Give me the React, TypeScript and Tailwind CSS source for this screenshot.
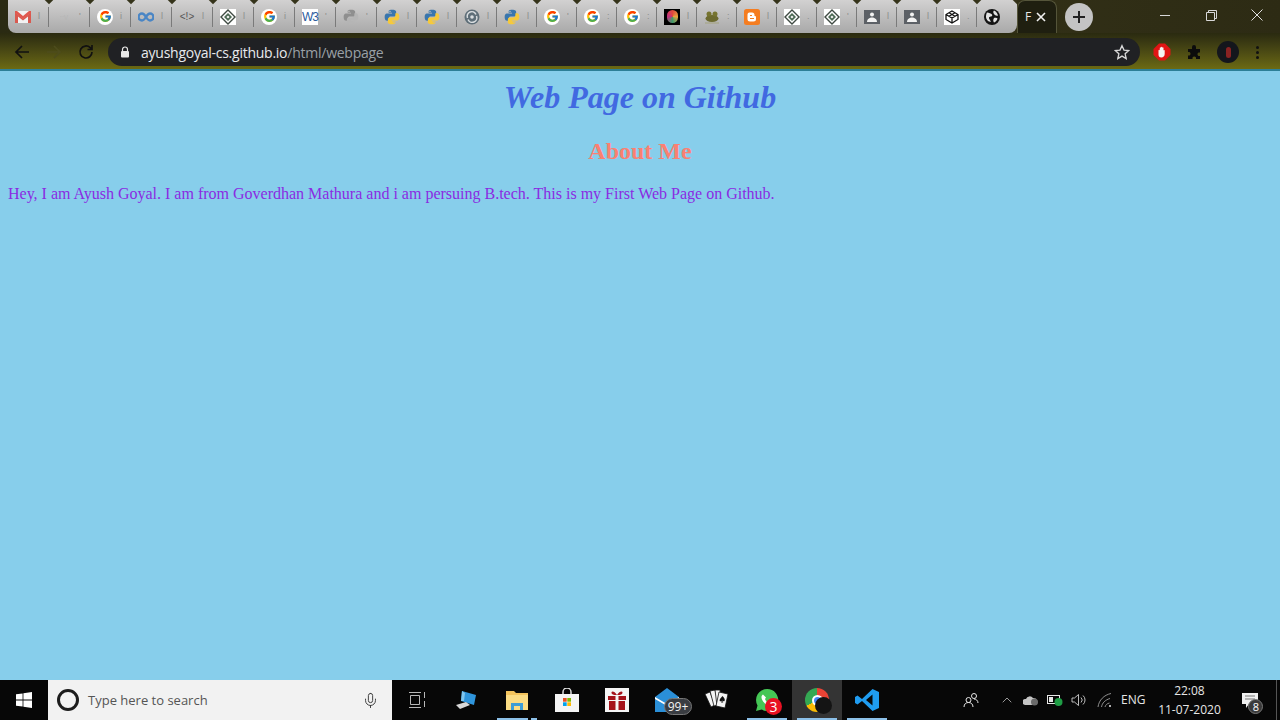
import React from "react";
import { FcGoogle } from "react-icons/fc";
import { ChevronUp, Mic } from "lucide-react";

const Google = () => (
  <span className="w-4 h-4 rounded-full bg-white flex items-center justify-center">
    <FcGoogle size={13} />
  </span>
);

const Gmail = () => (
  <svg width="16" height="12" viewBox="0 0 16 12">
    <rect x="0" y="0" width="16" height="12" fill="#f2f2f2" />
    <path d="M0 12V1.500L8 7.500l8-6V12h-3V5.500L8 9.500 3 5.500V12z" fill="#d9594f" />
    <path d="M0 0h2l6 5 6-5h2v2L8 8 0 2z" fill="#e0584e" />
  </svg>
);

const Python = ({ grey }: { grey?: boolean }) => (
  <svg width="16" height="16" viewBox="0 0 24 24">
    <path d="M11.900 1C6.600 1 7 3.300 7 3.300V5.800h5v1H5S1 6.300 1 12s3.400 5.500 3.400 5.500H7v-2.900s-.1-3.200 3.200-3.200h5s3 0 3-2.900V4s.5-3-6.300-3zM9 2.700a1 1 0 1 1 0 2 1 1 0 0 1 0-2z" fill={grey ? "#8f8f8f" : "#3a76ad"} />
    <path transform="rotate(180 12 12)" d="M11.900 1C6.600 1 7 3.300 7 3.300V5.800h5v1H5S1 6.300 1 12s3.400 5.500 3.400 5.500H7v-2.900s-.1-3.200 3.200-3.200h5s3 0 3-2.900V4s.5-3-6.300-3zM9 2.700a1 1 0 1 1 0 2 1 1 0 0 1 0-2z" fill={grey ? "#b5b5b5" : "#f5c93c"} />
  </svg>
);

const Diamond = () => (
  <span className="w-4 h-4 bg-white flex items-center justify-center">
    <svg width="16" height="16" viewBox="0 0 16 16">
      <path d="M8 1l7 7-7 7-7-7z" fill="none" stroke="#3f4a42" strokeWidth="1.400" />
      <path d="M8 4l4 4-4 4-4-4z" fill="#4d6b55" />
      <circle cx="8" cy="8" r="1.300" fill="#e6e6e6" />
    </svg>
  </span>
);

const Contact = () => (
  <span className="w-4 h-[14px] bg-[#5c6066] flex items-center justify-center">
    <svg width="12" height="11" viewBox="0 0 12 11">
      <circle cx="6" cy="3.500" r="2" fill="#f2f2f2" />
      <path d="M1 11c0-3 2.500-4.500 5-4.500s5 1.500 5 4.500z" fill="#f2f2f2" />
    </svg>
  </span>
);

// tab strip favicons, left to right
const tabs: { w: string; icon: React.ReactNode; mark?: string }[] = [
  { w: "w-[41px]", icon: <Gmail />, mark: "l" },
  { w: "w-[41px]", icon: <span className="w-4 text-center text-[8px] text-[#b6b6b6]">··v</span>, mark: "'" },
  { w: "w-[41px]", icon: <Google />, mark: "i" },
  {
    w: "w-[41px]",
    icon: (
      <svg width="16" height="10" viewBox="0 0 16 10">
        <path d="M8 5C6.500 2.500 5.500 1.500 4 1.500a3.500 3.500 0 0 0 0 7c1.500 0 2.500-1 4-3.500s2.500-3.500 4-3.500a3.500 3.500 0 0 1 0 7C10.500 8.500 9.500 7.500 8 5z" fill="none" stroke="#4a86c5" strokeWidth="2.400" />
      </svg>
    ),
    mark: "l",
  },
  { w: "w-[41px]", icon: <span className="w-4 text-center text-[10px] leading-none text-[#555] font-['Liberation_Sans',sans-serif]">&lt;!&gt;</span>, mark: "l" },
  { w: "w-[41px]", icon: <Diamond />, mark: "l" },
  { w: "w-[41px]", icon: <Google />, mark: "i" },
  {
    w: "w-[41px]",
    icon: <span className="w-4 h-4 bg-white text-center text-[12px] leading-4 tracking-[-1px] text-[#2a5a9c] font-['Liberation_Sans',sans-serif]">W3</span>,
    mark: "'",
  },
  { w: "w-[41px]", icon: <Python grey />, mark: "'" },
  { w: "w-[40px]", icon: <Python />, mark: "l" },
  { w: "w-[40px]", icon: <Python />, mark: "l" },
  {
    w: "w-[40px]",
    icon: (
      <svg width="16" height="16" viewBox="0 0 16 16">
        <circle cx="8" cy="8" r="7.500" fill="#5e6e78" />
        <path d="M3.500 9A4.500 4.500 0 0 1 12 5.500M12.500 7A4.500 4.500 0 0 1 4 10.500" fill="none" stroke="#d9dde0" strokeWidth="1.500" />
        <circle cx="8" cy="8" r="1.800" fill="#d9dde0" />
      </svg>
    ),
    mark: "l",
  },
  { w: "w-[40px]", icon: <Python />, mark: "l" },
  { w: "w-[40px]", icon: <Google />, mark: "'" },
  { w: "w-[40px]", icon: <Google />, mark: ":" },
  { w: "w-[40px]", icon: <Google />, mark: ":" },
  {
    w: "w-[40px]",
    icon: (
      <span className="w-4 h-4 bg-black flex items-center justify-center">
        <span className="w-[11px] h-[13px] rounded-full bg-[conic-gradient(#e0483e,#e8a33d,#3f9a6b,#c2317f,#e0483e)]" />
      </span>
    ),
    mark: "l",
  },
  {
    w: "w-[40px]",
    icon: (
      <svg width="16" height="16" viewBox="0 0 16 16">
        <ellipse cx="8" cy="9.500" rx="6.500" ry="3.500" fill="#6c6a2f" />
        <circle cx="5" cy="5" r="2.500" fill="#76742f" />
        <circle cx="11" cy="5" r="2.500" fill="#76742f" />
        <path d="M1 14h14" stroke="#a3a27c" strokeWidth="1" />
      </svg>
    ),
    mark: ":",
  },
  {
    w: "w-[40px]",
    icon: (
      <svg width="16" height="16" viewBox="0 0 16 16">
        <rect width="16" height="16" rx="2.500" fill="#f57d20" />
        <path d="M5.500 3.500h2.500a2.500 2.500 0 0 1 2.500 2.500v1h.5a1 1 0 0 1 1 1v2a2.500 2.500 0 0 1-2.500 2.500H6a2.500 2.500 0 0 1-2.500-2.500v-4.500a2 2 0 0 1 2-2z" fill="#fff" />
        <path d="M6 6.500h2M6 9.500h4" stroke="#f57d20" strokeWidth="1.200" />
      </svg>
    ),
    mark: "l",
  },
  { w: "w-[40px]", icon: <Diamond />, mark: "." },
  { w: "w-[40px]", icon: <Diamond />, mark: "'" },
  { w: "w-[40px]", icon: <Contact />, mark: "l" },
  { w: "w-[40px]", icon: <Contact />, mark: "l" },
  {
    w: "w-[40px]",
    icon: (
      <span className="w-4 h-4 bg-white flex items-center justify-center">
        <svg width="14" height="14" viewBox="0 0 14 14">
          <path d="M7 1l6 3.500v5L7 13l-6-3.500v-5zM1 4.500L7 8l6-3.500M7 8v5M4 2.800l6 3.500M10 2.800L4 6.300" fill="none" stroke="#111" strokeWidth="1.300" />
        </svg>
      </span>
    ),
    mark: ".",
  },
  {
    w: "w-[40px]",
    icon: (
      <svg width="16" height="16" viewBox="0 0 16 16">
        <circle cx="8" cy="8" r="8" fill="#141414" />
        <path d="M3 3.500c2 .5 4 .5 5 2s-1 2-2.500 2.500S6 11 7 12.500c-2.500 1-5-2-5-5 0-1.500.5-3 1-4zM10 1.500c2 .5 3.500 3 4 5-1.500.5-3 0-4-1.500s-1-2.500 0-3.500zM10 9c1.500-.5 3 0 3.500.5-.5 2-2 3.500-3.500 4-1-1.500-1-3 0-4.500z" fill="#e2e2e2" />
      </svg>
    ),
  },
];

const stopHand = (
  <svg width="18" height="18" viewBox="0 0 18 18">
    <path d="M6 0.500h6L17.500 6v6L12 17.500H6L0.500 12V6z" fill="#e11414" />
    <path d="M5.500 7.500c0-1 1.300-1 1.300 0V5c0-1 1.200-1 1.200 0V4.500c0-1 1.300-1 1.300 0V5c0-1 1.200-1 1.200 0v2.500c0-.8 1.200-.8 1.200 0V11c0 2-1.500 3.500-3.300 3.500-2 0-2.900-1.200-2.900-3z" fill="#f4f4f4" />
  </svg>
);

// taskbar apps, 50px cells
const apps: { icon: React.ReactNode; line?: boolean; active?: boolean; stacked?: boolean; badge?: React.ReactNode }[] = [
  {
    icon: (
      <svg width="24" height="24" viewBox="0 0 24 24">
        <path d="M7 3l14 4-2 10-13-4z" fill="#2f95dc" />
        <path d="M7 3l3 2-1 8-3 0z" fill="#7fc6f0" />
        <path d="M1 17l10-3 4 3-10 4z" fill="#d8d8d8" />
      </svg>
    ),
  },
  {
    line: true,
    stacked: true,
    icon: (
      <svg width="22" height="20" viewBox="0 0 22 20">
        <path d="M0 1h8l2 2h12v4H0z" fill="#f3c35c" />
        <rect y="5" width="22" height="15" fill="#fbdc84" />
        <path d="M5 20v-7h12v7h-3v-4H8v4z" fill="#3d9dd6" />
      </svg>
    ),
  },
  {
    icon: (
      <svg width="24" height="24" viewBox="0 0 24 24">
        <path d="M8 7V4a4 4 0 0 1 8 0v3" fill="none" stroke="#ddd" strokeWidth="1.500" />
        <rect y="6" width="24" height="18" fill="#f4f4f4" />
        <rect x="8" y="10" width="3.700" height="3.700" fill="#ea4f26" />
        <rect x="12.300" y="10" width="3.700" height="3.700" fill="#7eb900" />
        <rect x="8" y="14.300" width="3.700" height="3.700" fill="#00a2ed" />
        <rect x="12.300" y="14.300" width="3.700" height="3.700" fill="#feb800" />
      </svg>
    ),
  },
  {
    icon: (
      <svg width="24" height="24" viewBox="0 0 24 24">
        <rect width="24" height="24" fill="#f5f5f5" />
        <path d="M3 8h18v4H3zM4 13h16v9H4z" fill="#a5121a" />
        <rect x="10.500" y="7" width="3" height="15" fill="#f5f5f5" />
        <path d="M12 7C9 2 5 3 7 6c1 1 3 1 5 1zM12 7c3-5 7-4 5-1-1 1-3 1-5 1z" fill="#a5121a" />
      </svg>
    ),
  },
  {
    icon: (
      <svg width="24" height="24" viewBox="0 0 24 24">
        <path d="M0 9L12 0l12 9v15H0z" fill="#2a8fd8" />
        <path d="M0 9l12 7 12-7v2l-12 7-12-7z" fill="#fff" />
      </svg>
    ),
    badge: (
      <span className="absolute left-[9px] top-[10px] w-[28px] h-[17px] rounded-full bg-[#3a3d42] border border-[#777] text-[#f2f2f2] text-[12px] leading-[15px] text-center font-['Open_Sans',sans-serif]">
        99+
      </span>
    ),
  },
  {
    icon: (
      <svg width="26" height="22" viewBox="0 0 26 22">
        <path d="M1 5l5-2 5 13-4 2z" fill="#f4f4f4" stroke="#111" strokeWidth=".800" />
        <path d="M6 2l5-1 4 15-5 1z" fill="#f4f4f4" stroke="#111" strokeWidth=".800" />
        <path d="M11 1l5 0 2 15-5 1z" fill="#f4f4f4" stroke="#111" strokeWidth=".800" />
        <path d="M15 3l9 2-3 14-9-2z" fill="#f4f4f4" stroke="#111" strokeWidth=".800" />
        <path d="M18.500 7c1.500 2 3 3 2 5-1 .5-1.500 0-2-.5 0 1 .3 1.500.8 2h-2.300c.5-.5.7-1 .7-1.800-.5.5-1.200.8-2 .3-.7-2 1.500-3.200 2.800-5z" fill="#111" />
      </svg>
    ),
  },
  {
    line: true,
    icon: (
      <svg width="24" height="24" viewBox="0 0 24 24">
        <path d="M12 1a11 11 0 0 0-9.500 16.500L1 23l5.700-1.500A11 11 0 1 0 12 1z" fill="#45c655" />
        <path d="M8 6.500c-1.500 1-2 2.500-1 5s4 5.500 6.500 6c2 .5 3.500-.5 4-2l-3-2-1.500 1c-1.500-.5-2.500-2-3-3.500l1-1.500z" fill="#fff" />
      </svg>
    ),
    badge: (
      <span className="absolute left-[10px] top-[10px] w-[17px] h-[17px] rounded-full bg-[#e81123] text-white text-[14px] leading-[17px] text-center font-['Open_Sans',sans-serif]">
        3
      </span>
    ),
  },
  {
    line: true,
    active: true,
    icon: (
      <span className="w-6 h-6 rounded-full bg-[conic-gradient(#ea4335_0_120deg,#fbbc05_120deg_240deg,#34a853_240deg_360deg)] flex items-center justify-center">
        <span className="w-[11px] h-[11px] rounded-full bg-[#4285f4] border-2 border-white" />
      </span>
    ),
    badge: <span className="absolute left-[10px] top-[9px] w-[17px] h-[17px] rounded-full bg-[#141414]" />,
  },
  {
    line: true,
    icon: (
      <svg width="24" height="24" viewBox="0 0 24 24">
        <path d="M17.500 1L24 4v16l-6.500 3L7 13l-4.500 3.500L0 15V9l2.500-1.500L7 11zM17.500 6.500L11 12l6.500 5.500z" fill="#1f9cf0" fillRule="evenodd" />
      </svg>
    ),
  },
];

export default function App() {
  return (
    <div className="w-[1280px] h-[720px] overflow-hidden flex flex-col bg-[#87ceeb]">
      {/* Tab strip */}
      <div className="h-[33px] flex bg-gradient-to-r from-[#2a2a12] via-[#38361a] to-[#2d2b14] pl-[8px]">
        <div className="flex h-[33px] rounded-b-[8px] overflow-hidden bg-gradient-to-b from-[#d2d1d1] to-[#a9a9a9]">
          {tabs.map((t, i) => (
            <div key={i} className={`${t.w} relative flex items-center pl-[7px]`}>
              {t.icon}
              <span className="ml-[7px] text-[9px] text-[#8c8c8c] font-['Liberation_Sans',sans-serif]">{t.mark}</span>
              {i < tabs.length - 1 && <span className="absolute right-0 top-[7px] bottom-[6px] w-px bg-[#7a7a7a]" />}
              <span className="absolute -right-[3px] -top-[3px] w-[6px] h-[6px] rotate-45 bg-[#35331a]" />
            </div>
          ))}
        </div>
        <div className="w-[40px] h-[33px] rounded-t-[8px] bg-[#1f1f10] border border-b-0 border-[#55553a] flex items-center pl-[7px] gap-[5px] text-[#e8e8e8] text-[12px] font-['Open_Sans',sans-serif]">
          <span>F</span>
          <svg width="10" height="10" viewBox="0 0 10 10">
            <path d="M1 1l8 8M9 1l-8 8" stroke="#f2f2f2" strokeWidth="1.600" />
          </svg>
        </div>
        <div className="ml-[8px] mt-[3px] w-[28px] h-[28px] rounded-full bg-[#c4c4c4] flex items-center justify-center">
          <svg width="14" height="14" viewBox="0 0 14 14">
            <path d="M7 1v12M1 7h12" stroke="#222" strokeWidth="2" />
          </svg>
        </div>
        <div className="ml-auto flex h-[30px]">
          <div className="w-[46px] flex items-center justify-center">
            <span className="w-[10px] h-px bg-[#d8d8d8]" />
          </div>
          <div className="w-[46px] flex items-center justify-center">
            <svg width="11" height="11" viewBox="0 0 11 11">
              <path d="M.5 2.500h8v8h-8zM2.500 2.500v-2h8v8h-2" fill="none" stroke="#d8d8d8" />
            </svg>
          </div>
          <div className="w-[46px] flex items-center justify-center">
            <svg width="12" height="12" viewBox="0 0 12 12">
              <path d="M.5.500l11 11M11.500.500l-11 11" stroke="#e0e0e0" />
            </svg>
          </div>
        </div>
      </div>

      {/* Toolbar */}
      <div className="h-[38px] flex items-center bg-gradient-to-b from-[#2a2a10] to-[#6c6a12] border-b-2 border-[#2d7f97] pl-[13px] pr-[14px] pt-[2px]">
        <svg width="18" height="18" viewBox="0 0 18 18" className="mr-[14px]">
          <path d="M16 9H3M9 3L3 9l6 6" fill="none" stroke="#111" strokeWidth="1.700" />
        </svg>
        <svg width="18" height="18" viewBox="0 0 18 18" className="mr-[14px]">
          <path d="M2 9h13M9 3l6 6-6 6" fill="none" stroke="#4d4c1c" strokeWidth="1.700" />
        </svg>
        <svg width="18" height="18" viewBox="0 0 18 18" className="mr-[13px]">
          <path d="M15 9a6 6 0 1 1-1.800-4.300L15 6.500M15 2v4.500h-4.500" fill="none" stroke="#111" strokeWidth="1.700" />
        </svg>
        <div className="w-[1032px] h-[28px] rounded-full bg-[#202124] flex items-center pl-[12px] pr-[10px]">
          <svg width="10" height="12" viewBox="0 0 10 12" className="mr-[11px]">
            <path d="M2.500 5V3.500a2.500 2.500 0 0 1 5 0V5" fill="none" stroke="#e8e8e8" strokeWidth="1.200" />
            <rect x="1" y="5" width="8" height="6.500" rx="1" fill="#e8e8e8" />
          </svg>
          <span className="text-[14px] tracking-[-0.25px] text-[#e8eaed] font-['Open_Sans',sans-serif]">
            ayushgoyal-cs.github.io<span className="text-[#9aa0a6]">/html/webpage</span>
          </span>
          <svg width="16" height="16" viewBox="0 0 24 24" className="ml-auto">
            <path d="M12 2.500l3 6.700 7 .7-5.300 4.800 1.600 7.200L12 18.200l-6.300 3.700 1.600-7.200L2 9.900l7-.7z" fill="none" stroke="#d8d8d8" strokeWidth="2" />
          </svg>
        </div>
        <span className="ml-[13px] mr-[16px]">{stopHand}</span>
        <svg width="16" height="16" viewBox="0 0 16 16" className="mr-[14px]">
          <path d="M1 5h4V3a2 2 0 0 1 4 0v2h4v3.500h-1.500a2 2 0 0 0 0 3.500H13v3H9v-1.500a2 2 0 0 0-3.500 0V15H1v-3.500h1.500a2 2 0 0 0 0-3.500H1z" fill="#0c0c0c" />
        </svg>
        <span className="w-[22px] h-[22px] rounded-full bg-[#14161c] flex items-center justify-center mr-[17px]">
          <span className="w-[5px] h-[11px] rounded-sm bg-[#8a2222]" />
        </span>
        <span className="flex flex-col gap-[2px]">
          <span className="w-[3px] h-[3px] rounded-full bg-[#111]" />
          <span className="w-[3px] h-[3px] rounded-full bg-[#111]" />
          <span className="w-[3px] h-[3px] rounded-full bg-[#111]" />
        </span>
      </div>

      {/* Page content */}
      <main className="flex-1 p-2 font-['Liberation_Serif',serif]">
        <h1 className="text-[32px] leading-[37px] font-bold italic text-center text-[#4169e1] mb-[22px]">Web Page on Github</h1>
        <h2 className="text-[24px] leading-[27px] font-bold text-center text-[#fa8072] mb-[20px]">About Me</h2>
        <p className="text-[16px] leading-[18px] text-[#8a2be2]">
          Hey, I am Ayush Goyal. I am from Goverdhan Mathura and i am persuing B.tech. This is my First Web Page on Github.
        </p>
      </main>

      {/* Taskbar */}
      <div className="h-[40px] flex bg-[#070707]">
        <div className="w-[48px] flex items-center justify-center">
          <svg width="16" height="16" viewBox="0 0 16 16">
            <path d="M0 2.300l6.600-.9v6.200H0zM7.400 1.300L16 0v7.600H7.400zM0 8.400h6.600v6.200L0 13.700zM7.400 8.400H16V16l-8.600-1.200z" fill="#fff" />
          </svg>
        </div>
        <div className="w-[344px] bg-[#f2f2f2] flex items-center pl-[9px] pr-[13px]">
          <span className="w-[22px] h-[22px] rounded-full border-[3px] border-[#1c1c1c] mr-[9px]" />
          <span className="pt-[2px] text-[13px] text-[#555] font-['Open_Sans',sans-serif]">Type here to search</span>
          <Mic size={17} strokeWidth={1.3} className="ml-auto text-[#333]" />
        </div>
        <div className="w-[50px] flex items-center justify-center">
          <svg width="18" height="16" viewBox="0 0 18 16">
            <path d="M1 .500h12M1 15.500h12M2.500 3.500h9v9h-9zM16.500 0v6M16.500 9v6" fill="none" stroke="#b8b8b8" />
          </svg>
        </div>
        {apps.map((a, i) => (
          <div key={i} className={`w-[50px] relative flex items-center justify-center ${a.active ? "bg-[#343434]" : ""}`}>
            <span className="relative flex items-center justify-center">
              {a.icon}
              {a.badge}
            </span>
            {a.line && <span className="absolute bottom-0 left-[5px] right-[5px] h-[2px] bg-[#8cc0e8]" />}
            {a.stacked && <span className="absolute bottom-0 left-[36px] w-[3px] h-[2px] bg-[#070707]" />}
          </div>
        ))}
        <div className="flex-1 flex items-center text-[#e6e6e6] font-['Open_Sans',sans-serif]">
          <svg width="16" height="16" viewBox="0 0 16 16" className="ml-[71px]">
            <circle cx="5.500" cy="8" r="2.500" fill="none" stroke="#e6e6e6" />
            <circle cx="11" cy="4" r="2.500" fill="none" stroke="#e6e6e6" />
            <path d="M1 15c0-3 2-4.500 4.500-4.500S10 12 10 15M11 7c2 0 4 1.500 4 4" fill="none" stroke="#e6e6e6" />
          </svg>
          <ChevronUp size={16} strokeWidth={1} className="ml-[20px]" />
          <svg width="16" height="12" viewBox="0 0 16 12" className="ml-[8px]">
            <path d="M2 11a3 3 0 0 1 1-6 4 4 0 0 1 7-1 4 4 0 0 1 3 7z" fill="#c4c4c4" />
            <circle cx="11.500" cy="8" r="3.500" fill="#6a6a6a" />
          </svg>
          <svg width="16" height="12" viewBox="0 0 16 12" className="ml-[8px]">
            <rect x=".5" y="1.500" width="12" height="8" fill="none" stroke="#e6e6e6" />
            <rect x="2" y="3" width="4" height="5" fill="#e6e6e6" />
            <circle cx="11.500" cy="8" r="4" fill="#1f9d45" />
          </svg>
          <svg width="16" height="14" viewBox="0 0 16 14" className="ml-[8px]">
            <path d="M1 5h2.500L7.500 1.500v11L3.500 9H1zM10 4.500a3.500 3.500 0 0 1 0 5M12 2.500a6 6 0 0 1 0 9" fill="none" stroke="#cfcfcf" strokeWidth=".900" />
          </svg>
          <svg width="16" height="16" viewBox="0 0 16 16" className="ml-[10px]">
            <path d="M1 15C2 8 7 3 14 1.500M4.500 15c.7-4 3.500-7 8.500-8.500M8 15c.5-2 2-3.500 4.500-4" fill="none" stroke="#9d9d9d" strokeWidth=".900" />
            <circle cx="13" cy="14" r="1" fill="#e6e6e6" />
          </svg>
          <span className="ml-[8px] text-[12px]">ENG</span>
          <span className="ml-[12px] w-[64px] flex flex-col items-center text-[12px] leading-[19px] whitespace-nowrap">
            <span>22:08</span>
            <span>11-07-2020</span>
          </span>
          <span className="relative ml-[21px]">
            <svg width="16" height="15" viewBox="0 0 16 15">
              <path d="M0 0h16v11H7l-3 4v-4H0z" fill="#f0f0f0" />
              <path d="M3 3h10M3 6h10" stroke="#777" />
            </svg>
            <span className="absolute left-[6px] top-[6px] w-[15px] h-[15px] rounded-full bg-[#3a3a3a] border border-[#777] text-[11px] leading-[13px] text-center text-white">8</span>
          </span>
          <span className="ml-auto mr-[3px] w-px h-[40px] bg-[#555]" />
        </div>
      </div>
    </div>
  );
}
